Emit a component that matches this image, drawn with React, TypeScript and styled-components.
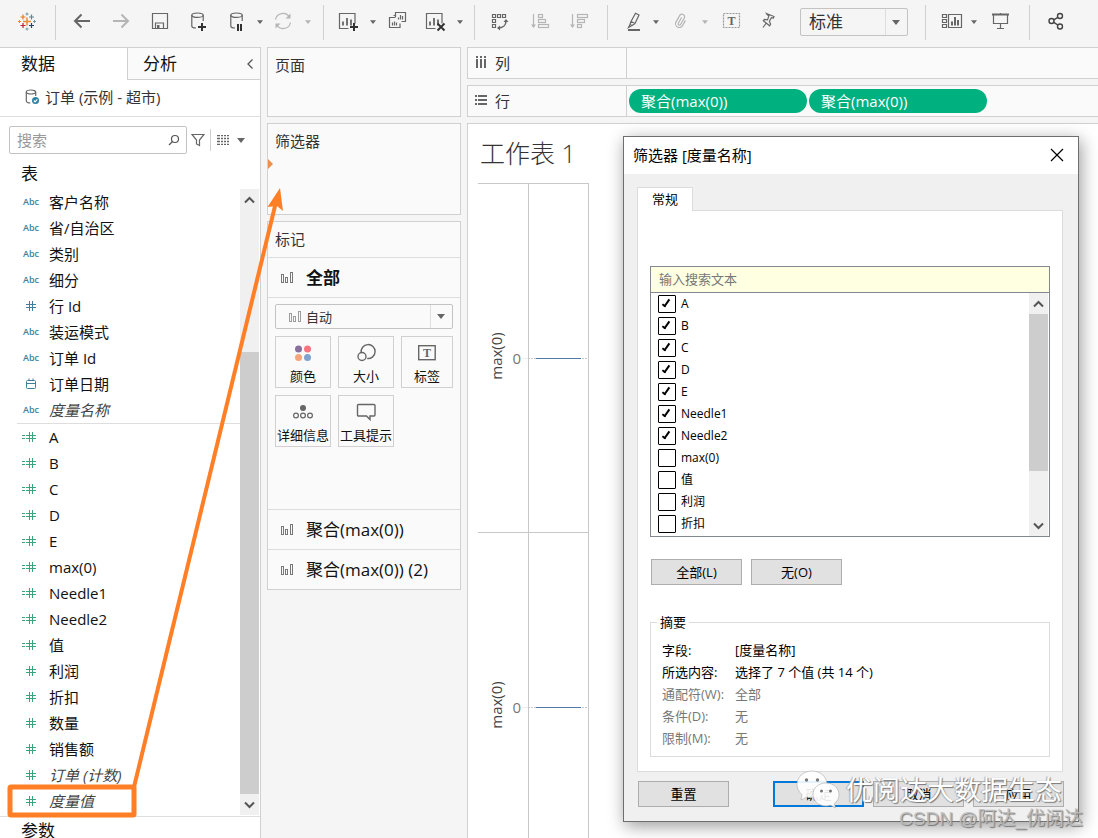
import React from "react";
import styled, { createGlobalStyle, css } from "styled-components";

const ui = `"Open Sans", "Noto Sans CJK SC", sans-serif`;
const line = "#d0d0d0";
const softLine = "#dedede";
const orange = "#ff7f27";

const GlobalStyle = createGlobalStyle`
  *, *::before, *::after { box-sizing: border-box; }
  body { margin: 0; background: #f5f5f5; color: #222; font: 15px/20px ${ui}; }
  button, input, select { font: inherit; color: inherit; margin: 0; padding: 0; border: 0; background: none; border-radius: 0; outline: none; }
  svg { display: block; flex: none; }
  ul, dl, dd, h1, h2, p { margin: 0; padding: 0; font-weight: 400; }
  li { list-style: none; }
`;

const Frame = styled.div`
  position: relative;
  display: flex;
  flex-direction: column;
  height: 100vh;
  overflow: hidden;
`;

/* ---------- toolbar ---------- */

const Toolbar = styled.header`
  flex: none;
  display: flex;
  align-items: center;
  height: 47px;
  padding: 0 0 3px 15px;
  color: #666;
`;

const ToolButton = styled.button<{ $gap?: number; $dim?: boolean }>`
  flex: none;
  width: 24px;
  height: 24px;
  margin-left: ${(p) => p.$gap ?? 15}px;
  color: ${(p) => (p.$dim ? "#b5b5b5" : "#666")};
`;

const CaretButton = styled(ToolButton)`
  display: grid;
  place-items: center;
  width: 8px;
`;

const Divider = styled.span<{ $gap?: number }>`
  flex: none;
  width: 1px;
  height: 35px;
  margin-left: ${(p) => p.$gap ?? 14}px;
  background: ${line};
`;

const Icon = ({ children, size = 24 }: { children: React.ReactNode; size?: number }) => (
  <svg width={size} height={size} viewBox={`0 0 ${size} ${size}`} fill="none" stroke="currentColor" strokeWidth="1.2" aria-hidden="true">
    {children}
  </svg>
);

const Caret = ({ wide }: { wide?: boolean }) => (
  <svg width={wide ? 8 : 6} height={wide ? 5 : 4} viewBox="0 0 8 5" aria-hidden="true">
    <path d="M0 0h8L4 5z" fill="currentColor" />
  </svg>
);

const Chevron = ({ up }: { up?: boolean }) => (
  <svg width="12" height="8" viewBox="0 0 12 8" fill="none" stroke="#555" strokeWidth="2" aria-hidden="true">
    <path d={up ? "M1 6.500 5.500 2 10 6.500" : "M1 1.500 5.500 6 10 1.500"} />
  </svg>
);

const Logo = () => (
  <Icon>
    <path d="M12 7.500v8M8 11.500h8" stroke="#eb8a2f" strokeWidth="1.500" />
    <path d="M8 4.500v5M5.500 7h5" stroke="#e8762d" />
    <path d="M16.500 4.500v5M14 7h5" stroke="#5b879b" />
    <path d="M8 13v5M5.500 15.500h5" stroke="#c72035" />
    <path d="M16.500 13v5M14 15.500h5" stroke="#1f447e" />
    <path d="M12 2.500v3M10.500 4h3M12 17.500v3M10.500 19h3M19.500 10v3M18 11.500h3" stroke="#7199a6" strokeWidth="1" />
    <path d="M4.500 10v3M3 11.500h3" stroke="#eb912c" strokeWidth="1" />
  </Icon>
);

const cylinder = "M4.800 5v11c0 1.200 2 2 4.200 2M16.200 5v6";
const Database = ({ children }: { children: React.ReactNode }) => (
  <Icon>
    <ellipse cx="10.500" cy="5.200" rx="5.700" ry="2.200" />
    <path d={cylinder} />
    {children}
  </Icon>
);

const ChartFrame = ({ children }: { children: React.ReactNode }) => (
  <Icon>
    <path d="M12.500 18.500h-9v-15h15.500v10" />
    <path d="M7 15.500v-4M11 15.500V8M15 15.500v-6" strokeWidth="1.800" />
    {children}
  </Icon>
);

const SortIcon = ({ widths }: { widths: number[] }) => (
  <Icon>
    <path d="M5.500 4v13" />
    <path d="M3 14.500h5L5.500 18z" fill="currentColor" stroke="none" />
    {widths.map((w, i) => (
      <rect key={i} x="10.500" y={4.5 + i * 5} width={w} height="3" />
    ))}
  </Icon>
);

const SelectBox = styled.span<{ $split: number }>`
  position: relative;
  flex: none;
  display: flex;
  border: 1px solid #c3c3c3;
  border-radius: 2px;
  color: #333;

  select { flex: 1; min-width: 0; appearance: none; }

  &::after {
    content: "";
    position: absolute;
    inset: 0 ${(p) => p.$split}px 0 auto;
    border-left: 1px solid ${softLine};
  }
`;

const ViewSelect = styled(SelectBox)`
  width: 108px;
  height: 28px;
  margin-left: 19px;
  select { padding-left: 8px; font-size: 17px; line-height: 26px; }
`;

const SelectCaret = styled.span`
  position: absolute;
  inset: 0 7px 0 auto;
  display: flex;
  align-items: center;
  color: #666;
  pointer-events: none;
`;

/* ---------- data pane ---------- */

const Body = styled.div`
  flex: 1;
  min-height: 0;
  display: flex;
`;

const DataPane = styled.aside`
  flex: none;
  width: 261px;
  background: #fff;
  border: solid ${line};
  border-width: 1px 1px 0 0;
  overflow: hidden;
`;

const Tabs = styled.div`
  display: flex;
  height: 32px;
  font-size: 17px;
`;

const PaneTab = styled.button<{ $active?: boolean }>`
  flex: ${(p) => (p.$active ? "none" : "1")};
  display: flex;
  align-items: center;
  justify-content: space-between;
  width: 127px;
  padding: 0 7px 0 ${(p) => (p.$active ? 21 : 15)}px;
  color: #111;
  ${(p) =>
    !p.$active &&
    css`
      background: #fafafa;
      border: solid ${line};
      border-width: 0 0 1px 1px;
    `}
`;

const Source = styled.div`
  display: flex;
  align-items: center;
  gap: 5px;
  height: 37px;
  padding: 0 0 2px 24px;
  border-bottom: 1px solid ${softLine};
  color: #333;
`;

const SearchRow = styled.div`
  display: flex;
  align-items: center;
  padding: 9px 12px 0 9px;
  color: #666;
`;

const SearchField = styled.label`
  display: flex;
  align-items: center;
  width: 178px;
  height: 28px;
  padding: 0 6px 0 7px;
  border: 1px solid #c3c3c3;
  border-radius: 2px;
  input { flex: 1; min-width: 0; }
  input::placeholder { color: #999; opacity: 1; }
`;

const IconButton = styled.button<{ $width: number }>`
  display: grid;
  place-items: center;
  width: ${(p) => p.$width}px;
  height: 28px;
  color: #666;
`;

const Rule = styled.span`
  width: 1px;
  height: 22px;
  margin-left: 1px;
  background: ${line};
`;

const PaneHeading = styled.h2`
  padding: 6px 0 0 21px;
  font-size: 17px;
  line-height: 28px;
  color: #111;
`;

const FieldArea = styled.div`
  display: flex;
  margin-top: 1px;
  padding-right: 1px;
`;

const FieldLists = styled.div`
  flex: 1;
  padding-left: 17px;
`;

const FieldList = styled.ul`
  & + & { border-top: 1px solid ${softLine}; padding-bottom: 1px; }
`;

const Field = styled.li<{ $italic?: boolean }>`
  display: flex;
  align-items: center;
  gap: 8px;
  height: 26px;
  padding-left: 4px;
  color: ${(p) => (p.$italic ? "#444" : "#111")};
  font-style: ${(p) => (p.$italic ? "italic" : "normal")};
`;

const TypeMark = styled.span<{ $measure?: boolean }>`
  flex: none;
  width: 20px;
  display: grid;
  place-items: center;
  font: 600 9px/12px ${ui};
  color: ${(p) => (p.$measure ? "#3aa57c" : "#3f7f99")};
`;

const Bar = styled.div<{ $width: number }>`
  flex: none;
  display: flex;
  flex-direction: column;
  width: ${(p) => p.$width}px;
  background: #f0f0f0;
`;

const BarButton = styled.button`
  flex: none;
  display: grid;
  place-items: center;
  height: 21px;
`;

const Segment = styled.span<{ $share: number; $filled?: boolean }>`
  flex: ${(p) => p.$share} 0 0;
  background: ${(p) => (p.$filled ? "#cdcdcd" : "transparent")};
`;

const Scrollbar = ({ width, parts }: { width: number; parts: [number, number, number] }) => (
  <Bar $width={width}>
    <BarButton aria-label="向上滚动"><Chevron up /></BarButton>
    <Segment $share={parts[0]} />
    <Segment $share={parts[1]} $filled />
    <Segment $share={parts[2]} />
    <BarButton aria-label="向下滚动"><Chevron /></BarButton>
  </Bar>
);

const ParameterHeading = styled(PaneHeading)`
  padding-top: 0;
  margin-top: 1px;
  border-top: 1px solid ${softLine};
`;

type Kind = "text" | "number" | "date" | "calc";

const dimensions: [string, Kind, boolean?][] = [
  ["客户名称", "text"],
  ["省/自治区", "text"],
  ["类别", "text"],
  ["细分", "text"],
  ["行 Id", "number"],
  ["装运模式", "text"],
  ["订单 Id", "text"],
  ["订单日期", "date"],
  ["度量名称", "text", true],
];

const measures: [string, Kind, boolean?][] = [
  ["A", "calc"],
  ["B", "calc"],
  ["C", "calc"],
  ["D", "calc"],
  ["E", "calc"],
  ["max(0)", "calc"],
  ["Needle1", "calc"],
  ["Needle2", "calc"],
  ["值", "calc"],
  ["利润", "number"],
  ["折扣", "number"],
  ["数量", "number"],
  ["销售额", "number"],
  ["订单 (计数)", "number", true],
  ["度量值", "number", true],
];

const KindMark = ({ kind, measure }: { kind: Kind; measure?: boolean }) => (
  <TypeMark $measure={measure}>
    {kind === "text" && "Abc"}
    {(kind === "number" || kind === "calc") && (
      <svg width="20" height="12" viewBox="0 0 20 12" fill="none" stroke="currentColor" aria-hidden="true">
        <path d="M5 4.500h10M5 7.500h10M8.500 1v10M11.500 1v10" />
        {kind === "calc" && <path d="M1 4.500h3M1 7.500h3" />}
      </svg>
    )}
    {kind === "date" && (
      <svg width="12" height="12" viewBox="0 0 12 12" fill="none" stroke="currentColor" aria-hidden="true">
        <rect x="1.500" y="2.500" width="9" height="8" rx="1" />
        <path d="M1.500 5.500h9M4 .5v2M8 .5v2" />
      </svg>
    )}
  </TypeMark>
);

/* ---------- cards ---------- */

const Cards = styled.section`
  flex: none;
  display: flex;
  flex-direction: column;
  gap: 6px;
  width: 206px;
  padding: 0 6px;
`;

const Card = styled.div<{ $min?: number }>`
  position: relative;
  flex: none;
  min-height: ${(p) => p.$min ?? 0}px;
  border: 1px solid ${line};
  background: #fafafa;
`;

const CardTitle = styled.h2`
  padding: 0 7px;
  font-size: 15px;
  line-height: 35px;
  color: #333;
`;

const DropMarker = styled.span`
  position: absolute;
  left: 0;
  top: 35px;
  border: solid transparent;
  border-width: 5px 0 5px 5px;
  border-left-color: #f28e4c;
`;

const MarkRow = styled.button<{ $bold?: boolean }>`
  display: flex;
  align-items: center;
  gap: 12px;
  width: 100%;
  height: 40px;
  padding-left: 12px;
  border-top: 1px solid ${softLine};
  font-size: 17px;
  font-weight: ${(p) => (p.$bold ? 700 : 400)};
  color: #111;
`;

const MarkBody = styled.div`
  display: grid;
  grid-template-columns: 56px 56px 52px;
  align-content: start;
  gap: 7px;
  min-height: 212px;
  padding: 6px 7px;
  border-top: 1px solid ${softLine};
`;

const MarkType = styled(SelectBox)`
  grid-column: 1 / -1;
  height: 25px;
  font-size: 13px;
  select { padding-left: 30px; }
`;

const TypeGlyph = styled.span`
  position: absolute;
  left: 12px;
  top: 5px;
  opacity: 0.7;
`;

const MarkButton = styled.button`
  display: flex;
  flex-direction: column;
  align-items: center;
  justify-content: space-between;
  height: 52px;
  padding-top: 4px;
  border: 1px solid ${line};
  font-size: 13px;
  line-height: 22px;
  white-space: nowrap;
  color: #111;
  svg { color: #666; }
`;

const MiniBars = () => (
  <svg width="14" height="14" viewBox="0 0 14 14" fill="none" stroke="#777" aria-hidden="true">
    <rect x="1.500" y="3.500" width="2" height="8" />
    <rect x="5.500" y="6.500" width="2" height="5" />
    <rect x="10.500" y="1.500" width="2" height="10" />
  </svg>
);

/* ---------- shelves and sheet ---------- */

const Workspace = styled.main`
  flex: 1;
  min-width: 0;
  display: flex;
  flex-direction: column;
  gap: 6px;
`;

const Shelf = styled.div`
  flex: none;
  display: flex;
  height: 32px;
  border: solid ${line};
  border-width: 1px 0 1px 1px;
  background: #fafafa;
  color: #333;
`;

const ShelfLabel = styled.div`
  display: flex;
  align-items: center;
  gap: 8px;
  width: 159px;
  padding-left: 7px;
  border-right: 1px solid ${line};
`;

const Pills = styled.div`
  display: flex;
  align-items: center;
  gap: 2px;
  padding-left: 2px;
`;

const Pill = styled.button`
  width: 178px;
  height: 24px;
  padding-left: 12px;
  border-radius: 12px;
  background: #00b180;
  color: #fff;
  text-align: left;
`;

const Sheet = styled.section`
  flex: 1;
  min-height: 0;
  padding: 12px 10px 0;
  border: solid ${line};
  border-width: 1px 0 0 1px;
  background: #fff;
  overflow: hidden;
`;

const SheetTitle = styled.h1`
  height: 47px;
  padding-left: 2px;
  font-size: 25px;
  font-weight: 300;
  line-height: 34px;
  color: #333;
`;

const ChartPane = ({ top }: { top: number }) => (
  <g transform={`translate(0 ${top})`}>
    <path d="M0 .5h111" stroke="#c8c8c8" />
    <text transform="translate(24 173) rotate(-90)" textAnchor="middle" fontSize="15" fill="#444">max(0)</text>
    <text x="43" y="181" textAnchor="end" fontSize="15" fill="#777">0</text>
    <path d="M44 175.500h6" stroke="#eee" />
    <path d="M50 175.500h60" stroke="#c8c8c8" strokeDasharray="2 1" />
    <path d="M58 175.500h45" stroke="#4e79a7" />
  </g>
);

/* ---------- dialog ---------- */

const Dialog = styled.div`
  position: absolute;
  top: 136px;
  right: 19px;
  width: 456px;
  border: 1px solid #6e6e6e;
  background: #f0f0f0;
  box-shadow: 2px 4px 16px rgba(0, 0, 0, 0.4);
  color: #000;
  font-size: 13px;
  line-height: 22px;
`;

const TitleBar = styled.div`
  display: flex;
  align-items: center;
  justify-content: space-between;
  height: 37px;
  padding: 0 14px 2px 9px;
  background: #fff;
  h2 { font-size: 15px; }
`;

const DialogBody = styled.div`
  padding: 13px 15px 14px 13px;
`;

const DialogTab = styled.button`
  position: relative;
  display: block;
  width: 56px;
  height: 24px;
  margin-bottom: -1px;
  padding-bottom: 2px;
  border: 1px solid #dcdcdc;
  border-bottom: 0;
  background: #fff;
`;

const Panel = styled.div`
  padding: 55px 12px 14px;
  border: 1px solid #dcdcdc;
  background: #fff;
`;

const Lookup = styled.input`
  display: block;
  width: 100%;
  height: 27px;
  padding: 0 8px 2px;
  border: 1px solid #828790;
  background: #ffffe1;
  &::placeholder { color: #777; opacity: 1; }
`;

const ListBox = styled.div`
  display: flex;
  height: 244px;
  border: 1px solid #828790;
  border-top: 0;
  padding-right: 1px;
`;

const Options = styled.ul`
  flex: 1;
  overflow: hidden;
  font-size: 12px;
  line-height: 20px;
`;

const Option = styled.label`
  display: flex;
  align-items: center;
  gap: 5px;
  height: 22px;
  padding-left: 7px;

  input {
    position: relative;
    appearance: none;
    width: 18px;
    height: 18px;
    border: 1px solid #000;
    border-radius: 1px;
  }

  input:checked::after {
    content: "";
    position: absolute;
    left: 5px;
    top: 2px;
    width: 4px;
    height: 9px;
    border: solid #000;
    border-width: 0 2px 2px 0;
    transform: rotate(35deg);
  }
`;

const PushButton = styled.button<{ $default?: boolean }>`
  width: 91px;
  height: 26px;
  border: ${(p) => (p.$default ? "2px solid #0078d7" : "1px solid #adadad")};
  background: #e1e1e1;
`;

const PickRow = styled.div`
  display: flex;
  gap: 9px;
  margin: 22px 1px 26px;
`;

const Summary = styled.fieldset`
  margin: 0;
  padding: 6px 11px 7px;
  border: 1px solid #dcdcdc;
  legend { padding: 0 3px; margin-left: -5px; }
`;

const SummaryList = styled.dl`
  display: grid;
  grid-template-columns: 73px 1fr;
  white-space: nowrap;
`;

const Entry = styled.div<{ $dim?: boolean }>`
  display: contents;
  color: ${(p) => (p.$dim ? "#777" : "#000")};
`;

const Footer = styled.div`
  display: flex;
  gap: 9px;
  margin: 9px -1px 0 1px;
  button:first-child { margin-right: auto; }
`;

/* ---------- overlays ---------- */

const Overlay = styled.svg`
  position: absolute;
  left: 0;
  top: 0;
  pointer-events: none;
`;

const Watermark = styled.div`
  position: absolute;
  right: 36px;
  top: 768px;
  display: flex;
  align-items: center;
  gap: 6px;
  color: #fff;
  font-size: 27px;
  line-height: 44px;
  white-space: nowrap;
  text-shadow: 1px 1px 1px #777, -1px 0 1px #aaa;
  pointer-events: none;
`;

const Credit = styled.p`
  position: absolute;
  right: 15px;
  top: 805px;
  color: rgba(190, 190, 190, 0.9);
  font: 19px/28px "Liberation Sans", "Noto Sans CJK SC", sans-serif;
  white-space: nowrap;
  text-shadow: 1px 1px 1px #777;
  pointer-events: none;
`;

const options = ["A", "B", "C", "D", "E", "Needle1", "Needle2", "max(0)", "值", "利润", "折扣"];

const summary: [string, string, boolean?][] = [
  ["字段:", "[度量名称]"],
  ["所选内容:", "选择了 7 个值 (共 14 个)"],
  ["通配符(W):", "全部", true],
  ["条件(D):", "无", true],
  ["限制(M):", "无", true],
];

export default function App() {
  return (
    <Frame>
      <GlobalStyle />
      <Toolbar>
        <ToolButton $gap={0} aria-label="开始页面"><Logo /></ToolButton>
        <Divider $gap={16} />
        <ToolButton $gap={14} aria-label="撤消"><Icon><path d="M20 11H5M11.500 4.500 5 11l6.500 6.500" strokeWidth="2" /></Icon></ToolButton>
        <ToolButton $dim aria-label="重做"><Icon><path d="M4 11h15M12.500 4.500 19 11l-6.500 6.500" strokeWidth="2" /></Icon></ToolButton>
        <ToolButton aria-label="保存">
          <Icon>
            <path d="M4.500 3.500h15v15h-15zM7.500 18v-5h8v5" />
            <path d="M9 15h2.500v3H9z" fill="currentColor" stroke="none" />
          </Icon>
        </ToolButton>
        <ToolButton aria-label="新建数据源"><Database><path d="M15 13v8M11 17h8" stroke="#333" strokeWidth="2" /></Database></ToolButton>
        <ToolButton aria-label="暂停自动更新"><Database><path d="M12 14v7M15 14v7" stroke="#333" strokeWidth="2" /></Database></ToolButton>
        <CaretButton $gap={6} aria-label="更新选项"><Caret /></CaretButton>
        <ToolButton $gap={7} $dim aria-label="运行更新">
          <Icon>
            <path d="M4.500 9.500a7.500 7.500 0 0 1 14-2M19.500 12.500a7.500 7.500 0 0 1-14 2" />
            <path d="M19.500 3.500v5h-5zM4.500 18.500v-5h5z" fill="currentColor" stroke="none" />
          </Icon>
        </ToolButton>
        <CaretButton $gap={9} $dim aria-label="运行选项"><Caret /></CaretButton>
        <Divider $gap={11} />
        <ToolButton $gap={12} aria-label="新建工作表"><ChartFrame><path d="M18 13v8M14 17h8" stroke="#333" strokeWidth="2" /></ChartFrame></ToolButton>
        <CaretButton $gap={9} aria-label="新建选项"><Caret /></CaretButton>
        <ToolButton $gap={9} aria-label="复制工作表">
          <Icon>
            <path d="M7.500 5.500h2M9.500 7V2.500h10v9h-4M9.500 7.500h-6v10h10.500v-4" />
            <path d="M12.500 9.500v-2M14.500 9.500V5M16.500 9.500V6M6.500 15.500v-3M8.500 15.500v-4M10.500 15.500v-3" />
          </Icon>
        </ToolButton>
        <ToolButton $gap={13} aria-label="清除工作表"><ChartFrame><path d="m14.500 13.500 7 7M21.500 13.500l-7 7" stroke="#333" strokeWidth="2" /></ChartFrame></ToolButton>
        <CaretButton $gap={9} aria-label="清除选项"><Caret /></CaretButton>
        <Divider $gap={10} />
        <ToolButton $gap={13} aria-label="交换行和列">
          <Icon>
            <path d="M4.500 4.500h3v3h-3zM9.500 4.500h3v3h-3zM14.500 4.500h3v3h-3zM4.500 9.500h3v3h-3zM4.500 14.500h3v3h-3z" />
            <path d="M10 18c5 0 8-3 8-7" strokeWidth="1.500" />
            <path d="m15.500 12 2.500-3 2.500 3zM12 15.500 9 18l3 2.500z" fill="currentColor" stroke="none" />
          </Icon>
        </ToolButton>
        <ToolButton $gap={16} $dim aria-label="升序排序"><SortIcon widths={[4, 7, 10]} /></ToolButton>
        <ToolButton $dim aria-label="降序排序"><SortIcon widths={[10, 7, 4]} /></ToolButton>
        <Divider $gap={16} />
        <ToolButton $gap={14} aria-label="突出显示">
          <Icon>
            <path d="M6 20h12" strokeWidth="2" />
            <path d="m9 11.500 4.500-8.200 3.500 1.700-4 8.500zM9 11.500l-1 3 2 1 3-2M8 14.500 6.500 17.500l3.500-2" />
          </Icon>
        </ToolButton>
        <CaretButton $gap={6} aria-label="突出显示选项"><Caret /></CaretButton>
        <ToolButton $gap={9} $dim aria-label="组成员">
          <Icon><path transform="rotate(30 11.500 11)" d="M15.500 8v6a3.700 3.700 0 0 1-7.400 0V6a2.700 2.700 0 0 1 5.200 0v8a1.300 1.300 0 0 1-2.600 0V7.500" /></Icon>
        </ToolButton>
        <CaretButton $gap={8} $dim aria-label="组选项"><Caret /></CaretButton>
        <ToolButton $gap={11} aria-label="显示标记标签">
          <Icon>
            <rect x="3.500" y="3.500" width="16" height="14" strokeDasharray="2 1" stroke="#999" />
            <text x="11.500" y="15" textAnchor="middle" fontFamily="Liberation Serif, serif" fontSize="12" fontWeight="700" fill="currentColor" stroke="none">T</text>
          </Icon>
        </ToolButton>
        <ToolButton $gap={13} aria-label="固定轴">
          <Icon><path d="m9.500 3.500 7.500 3-.6 1.500-2-.4-2 3.600 1.200 3-1 1.600-6.300-5 1.200-1.300 3 .4 1.500-4.300-1.700-.8zM9.300 13 6 17.500" /></Icon>
        </ToolButton>
        <ViewSelect $split={21}>
          <select aria-label="适合"><option>标准</option></select>
          <SelectCaret><Caret wide /></SelectCaret>
        </ViewSelect>
        <Divider $gap={17} />
        <ToolButton $gap={14} aria-label="智能推荐">
          <Icon>
            <path d="M2.500 4.500h4v3h-4zM2.500 9.500h4v3h-4zM2.500 14.500h4v3h-4zM8.500 4.500h13v13h-13z" />
            <path d="M12 15.500v-4M15 15.500V7M18 15.500V10" strokeWidth="2" />
          </Icon>
        </ToolButton>
        <CaretButton $gap={6} aria-label="智能推荐选项"><Caret /></CaretButton>
        <ToolButton $gap={11} aria-label="演示模式">
          <Icon>
            <path d="M3 4.500h17" strokeWidth="2" />
            <path d="M4.500 5v8.500h14V5M11.500 13.500v5M8 18.500h7M11.500 3v1" />
          </Icon>
        </ToolButton>
        <Divider $gap={16} />
        <ToolButton aria-label="共享" $gap={14}>
          <Icon>
            <g stroke="#444" strokeWidth="1.400">
              <circle cx="7.500" cy="11" r="2.500" />
              <circle cx="16" cy="6" r="2.500" />
              <circle cx="16" cy="16.500" r="2.500" />
              <path d="m9.800 9.800 4-2.500M9.800 12.300l4 2.700" />
            </g>
          </Icon>
        </ToolButton>
      </Toolbar>

      <Body>
        <DataPane>
          <Tabs role="tablist">
            <PaneTab $active role="tab" aria-selected="true">数据</PaneTab>
            <PaneTab role="tab" aria-selected="false">
              分析
              <svg width="6" height="10" viewBox="0 0 6 10" fill="none" stroke="#555" strokeWidth="1.300" aria-hidden="true"><path d="M5.500.5 1 5l4.500 4.500" /></svg>
            </PaneTab>
          </Tabs>
          <Source>
            <svg width="16" height="18" viewBox="0 0 16 18" fill="none" stroke="#666" strokeWidth="1.200" aria-hidden="true">
              <ellipse cx="7" cy="4" rx="4.700" ry="2" />
              <path d="M2.300 4v9c0 1 2 2 4 2M11.700 4v4" />
              <circle cx="11.500" cy="12.500" r="3.500" fill="#2f7f9f" stroke="none" />
              <path d="m9.800 12.500 1.300 1.300 2.200-2.400" stroke="#fff" />
            </svg>
            订单 (示例 - 超市)
          </Source>
          <SearchRow>
            <SearchField>
              <input placeholder="搜索" aria-label="搜索" />
              <svg width="12" height="12" viewBox="0 0 12 12" fill="none" stroke="#555" strokeWidth="1.200" aria-hidden="true">
                <circle cx="7" cy="5" r="3.500" />
                <path d="M4.500 7.500 1 11" />
              </svg>
            </SearchField>
            <IconButton $width={22} aria-label="筛选字段">
              <svg width="14" height="14" viewBox="0 0 14 14" fill="none" stroke="currentColor" strokeWidth="1.200" aria-hidden="true"><path d="M1 1.500h12L8.500 7v5.500l-3-1.500V7z" /></svg>
            </IconButton>
            <Rule />
            <IconButton $width={24} aria-label="视图">
              <svg width="12" height="10" viewBox="0 0 12 10" stroke="currentColor" strokeWidth="1.300" aria-hidden="true"><path d="M0 .5h12M0 3.500h12M0 6.500h12M0 9.500h12" strokeDasharray="3 1 2 1 2 1 2" /></svg>
            </IconButton>
            <IconButton $width={12} aria-label="视图选项"><Caret wide /></IconButton>
          </SearchRow>
          <PaneHeading>表</PaneHeading>
          <FieldArea>
            <FieldLists>
              <FieldList>
                {dimensions.map(([name, kind, italic]) => (
                  <Field key={name} $italic={italic}><KindMark kind={kind} />{name}</Field>
                ))}
              </FieldList>
              <FieldList>
                {measures.map(([name, kind, italic]) => (
                  <Field key={name} $italic={italic}><KindMark kind={kind} measure />{name}</Field>
                ))}
              </FieldList>
            </FieldLists>
            <Scrollbar width={19} parts={[142, 442, 0]} />
          </FieldArea>
          <ParameterHeading>参数</ParameterHeading>
        </DataPane>

        <Cards>
          <Card $min={70}><CardTitle>页面</CardTitle></Card>
          <Card $min={92}><CardTitle>筛选器</CardTitle><DropMarker /></Card>
          <Card>
            <CardTitle>标记</CardTitle>
            <MarkRow $bold><MiniBars />全部</MarkRow>
            <MarkBody>
              <MarkType $split={21}>
                <TypeGlyph><MiniBars /></TypeGlyph>
                <select aria-label="标记类型"><option>自动</option></select>
                <SelectCaret><Caret wide /></SelectCaret>
              </MarkType>
              <MarkButton>
                <svg width="24" height="24" viewBox="0 0 24 24" aria-hidden="true">
                  <circle cx="7.500" cy="8" r="3.500" fill="#87709c" />
                  <circle cx="16.500" cy="8" r="3.500" fill="#f8747f" />
                  <circle cx="7.500" cy="16.500" r="3.500" fill="#f4a57c" />
                  <circle cx="16.500" cy="16.500" r="3.500" fill="#7fa3cd" />
                </svg>
                颜色
              </MarkButton>
              <MarkButton>
                <Icon>
                  <path d="M7.200 11.700a7 7 0 1 1 6 5.800" strokeWidth="1.400" />
                  <circle cx="8" cy="15.500" r="4" strokeWidth="1.400" />
                </Icon>
                大小
              </MarkButton>
              <MarkButton>
                <Icon>
                  <rect x="3.700" y="4.700" width="16.500" height="14" strokeWidth="1.400" />
                  <text x="12" y="16" textAnchor="middle" fontFamily="Liberation Serif, serif" fontSize="12" fontWeight="700" fill="currentColor" stroke="none">T</text>
                </Icon>
                标签
              </MarkButton>
              <MarkButton>
                <Icon>
                  <circle cx="12" cy="8" r="3" fill="currentColor" stroke="none" />
                  <circle cx="5" cy="15.500" r="2.400" />
                  <circle cx="12" cy="15.500" r="2.400" />
                  <circle cx="19" cy="15.500" r="2.400" />
                </Icon>
                详细信息
              </MarkButton>
              <MarkButton>
                <Icon><path d="M4.500 4.500h15.500a1 1 0 0 1 1 1v9.500a1 1 0 0 1-1 1h-4V19.500l-3.500-3.500h-8a1 1 0 0 1-1-1V5.500a1 1 0 0 1 1-1z" strokeWidth="1.400" /></Icon>
                工具提示
              </MarkButton>
            </MarkBody>
            <MarkRow><MiniBars />聚合(max(0))</MarkRow>
            <MarkRow><MiniBars />聚合(max(0)) (2)</MarkRow>
          </Card>
        </Cards>

        <Workspace>
          <Shelf>
            <ShelfLabel>
              <svg width="12" height="14" viewBox="0 0 12 14" stroke="#666" strokeWidth="2" aria-hidden="true"><path d="M2 0v2M6 0v2M10 0v2M2 3v9M6 3v9M10 3v9" /></svg>
              列
            </ShelfLabel>
          </Shelf>
          <Shelf>
            <ShelfLabel>
              <svg width="12" height="12" viewBox="0 0 12 12" stroke="#666" strokeWidth="2" aria-hidden="true"><path d="M0 1h2M0 5h2M0 9h2M3 1h9M3 5h9M3 9h9" /></svg>
              行
            </ShelfLabel>
            <Pills>
              <Pill>聚合(max(0))</Pill>
              <Pill>聚合(max(0))</Pill>
            </Pills>
          </Shelf>
          <Sheet>
            <SheetTitle>工作表 1</SheetTitle>
            <svg width="112" height="700" viewBox="0 0 112 700" fontFamily="Open Sans, sans-serif" role="img" aria-label="max(0)">
              <path d="M50.500 0v700M110.500 0v700" stroke="#c8c8c8" />
              <ChartPane top={0} />
              <ChartPane top={349} />
            </svg>
          </Sheet>
        </Workspace>
      </Body>

      <Dialog role="dialog" aria-labelledby="filter-title">
        <TitleBar>
          <h2 id="filter-title">筛选器 [度量名称]</h2>
          <button aria-label="关闭">
            <svg width="14" height="14" viewBox="0 0 14 14" stroke="#000" strokeWidth="1.200" aria-hidden="true"><path d="m1 1 12 12M13 1 1 13" /></svg>
          </button>
        </TitleBar>
        <DialogBody>
          <DialogTab role="tab" aria-selected="true">常规</DialogTab>
          <Panel>
            <Lookup placeholder="输入搜索文本" aria-label="输入搜索文本" />
            <ListBox>
              <Options>
                {options.map((name, i) => (
                  <li key={name}><Option><input type="checkbox" defaultChecked={i < 7} />{name}</Option></li>
                ))}
              </Options>
              <Scrollbar width={19} parts={[0, 157, 44]} />
            </ListBox>
            <PickRow>
              <PushButton>全部(L)</PushButton>
              <PushButton>无(O)</PushButton>
            </PickRow>
            <Summary>
              <legend>摘要</legend>
              <SummaryList>
                {summary.map(([term, value, dim]) => (
                  <Entry key={term} $dim={dim}><dt>{term}</dt><dd>{value}</dd></Entry>
                ))}
              </SummaryList>
            </Summary>
          </Panel>
          <Footer>
            <PushButton>重置</PushButton>
            <PushButton $default>确定</PushButton>
            <PushButton>取消</PushButton>
            <PushButton>应用</PushButton>
          </Footer>
        </DialogBody>
      </Dialog>

      <Overlay width="300" height="838" viewBox="0 0 300 838" fill="none" stroke={orange} aria-hidden="true">
        <rect x="10" y="787" width="124" height="28" rx="1" strokeWidth="5" />
        <path d="M134 787 275.500 204" strokeWidth="4" />
        <path d="m280 188 3 23-6-5-9.500 1z" fill={orange} stroke="none" />
      </Overlay>

      <Watermark>
        <svg width="44" height="40" viewBox="0 0 44 40" fill="#fff" fillOpacity="0.9" stroke="#aaa" strokeWidth="0.600" aria-hidden="true">
          <path d="M16 1C7.500 1 1 7 1 14.500c0 4 2 7.500 5 10L5 30l6-3c2 .5 3.500.8 5.500.8C25 27.800 31 22 31 14.500S24.500 1 16 1z" />
          <path d="M30 13c-7.500 0-13 5-13 11.500S22.500 36 30 36c1.500 0 3-.3 4.500-.7l5 2.700-1.200-4.500c3-2 4.700-5 4.700-9C43 18 37.500 13 30 13z" />
          <g fill="#666" stroke="none">
            <circle cx="10.500" cy="10" r="1.700" />
            <circle cx="21.500" cy="10" r="1.700" />
            <circle cx="25.500" cy="21" r="1.500" />
            <circle cx="34.500" cy="21" r="1.500" />
          </g>
        </svg>
        优阅达大数据生态
      </Watermark>
      <Credit>CSDN @阿达_优阅达</Credit>
    </Frame>
  );
}
